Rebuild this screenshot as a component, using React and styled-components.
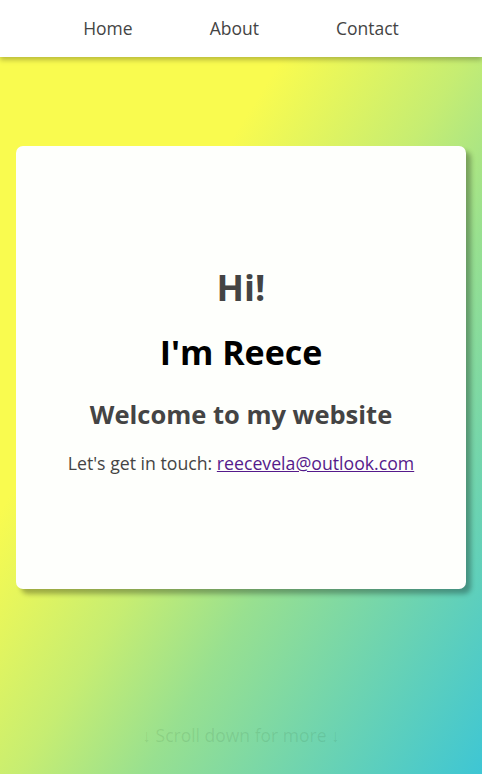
import React from "react";
import styled, { createGlobalStyle } from "styled-components";

const Global = createGlobalStyle`
  html, body { margin: 0; padding: 0; }
  body {
    font-family: "Open Sans", "Noto Sans", sans-serif;
    overflow: hidden;
  }
  * { box-sizing: border-box; }
`;

const Page = styled.div`
  min-height: 100vh;
  display: flex;
  flex-direction: column;
  background: linear-gradient(
    to bottom right,
    #f9fb4f 0%,
    #f9fb4f 33%,
    #c6ed72 52%,
    #98e090 65%,
    #3ec6d4 100%
  );
`;

const Nav = styled.nav`
  position: relative;
  z-index: 2;
  height: 57px;
  background: #ffffff;
  box-shadow: 0 3px 5px rgba(0, 0, 0, 0.25);
  display: flex;
  justify-content: center;
  align-items: center;
  gap: 77px;
`;

const NavLink = styled.a`
  color: #444444;
  font-size: 17.5px;
  text-decoration: none;
  padding-bottom: 1px;
`;

const Hero = styled.main`
  flex: 1;
  display: flex;
  flex-direction: column;
  align-items: center;
  padding-top: 89px;
`;

const Card = styled.section`
  width: 450px;
  height: 443px;
  background: #fefffc;
  border-radius: 7px;
  box-shadow: 5px 5px 5px rgba(0, 0, 0, 0.3);
  display: flex;
  flex-direction: column;
  align-items: center;
  justify-content: center;
  text-align: center;
  padding-top: 6px;
`;

const Heading = styled.h1`
  margin: 0;
  font-weight: 700;
  font-size: ${(p) => p.$size}px;
  line-height: 1.2;
  color: ${(p) => p.$color};
  margin-bottom: ${(p) => p.$gap}px;
`;

const Contact = styled.p`
  margin: 0;
  font-size: 17.7px;
  color: #444444;
`;

const Mail = styled.a`
  color: #551a8b;
  text-decoration: underline;
`;

const ScrollHint = styled.div`
  margin-top: auto;
  padding-bottom: 27px;
  font-size: 17.5px;
  color: rgba(40, 90, 40, 0.12);
`;

export default function App() {
  return (
    <>
      <Global />
      <Page>
        <Nav>
          <NavLink href="#">Home</NavLink>
          <NavLink href="#">About</NavLink>
          <NavLink href="#">Contact</NavLink>
        </Nav>
        <Hero>
          <Card>
            <Heading $size={36} $color="#444444" $gap={23}>Hi!</Heading>
            <Heading $size={34} $color="#000000" $gap={26}>I'm Reece</Heading>
            <Heading $size={25.5} $color="#444444" $gap={21}>Welcome to my website</Heading>
            <Contact>
              Let's get in touch: <Mail href="#">reecevela@outlook.com</Mail>
            </Contact>
          </Card>
          <ScrollHint>↓ Scroll down for more ↓</ScrollHint>
        </Hero>
      </Page>
    </>
  );
}
